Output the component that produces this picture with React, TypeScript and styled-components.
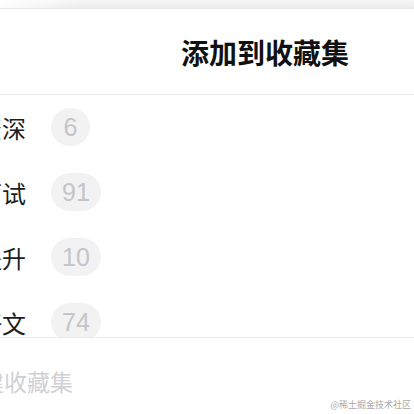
import React from "react";
import styled, { createGlobalStyle } from "styled-components";

const Global = createGlobalStyle`
  html, body {
    margin: 0;
    padding: 0;
    background: #ffffff;
    overflow: hidden;
    width: 414px;
    height: 414px;
  }
  body {
    font-family: "Liberation Sans", "Noto Sans CJK SC", sans-serif;
  }
  *, *::before, *::after {
    box-sizing: border-box;
  }
`;

const Page = styled.div`
  position: relative;
  width: 414px;
  height: 414px;
  overflow: hidden;
  display: flex;
  flex-direction: column;
`;

const Backdrop = styled.div`
  height: 8px;
  flex: none;
  background:
    linear-gradient(to right, rgba(255, 255, 255, 0.95) 0px, rgba(255, 255, 255, 0) 80px),
    repeating-linear-gradient(
      to right,
      transparent 0px,
      transparent 79px,
      #dde6f4 79px,
      #dde6f4 80px
    ),
    linear-gradient(to bottom, #f7f7f7, #ebebeb);
  background-size: 100% 100%, 40px 100%, 100% 100%;
`;

const Modal = styled.div`
  margin-left: -60px;
  width: 650px;
  flex: 1;
  display: flex;
  flex-direction: column;
  background: #ffffff;
  border-top: 1px solid #e6e6e6;
`;

const Header = styled.div`
  height: 86px;
  display: flex;
  align-items: center;
  justify-content: center;
  border-bottom: 1px solid #ebebeb;
  flex: none;
`;

const Title = styled.h2`
  margin: 0;
  font-size: 28px;
  font-weight: 700;
  color: #111111;
  font-family: "Noto Sans CJK SC", sans-serif;
`;

const List = styled.ul`
  list-style: none;
  margin: 0;
  padding: 13px 0 0 38px;
  height: 242px;
  overflow: hidden;
  flex: none;
  display: flex;
  flex-direction: column;
  gap: 27px;
`;

const Row = styled.li`
  height: 38px;
  flex: none;
  display: flex;
  align-items: center;
  gap: 25px;
`;

const Label = styled.span`
  font-family: "Noto Sans CJK SC", sans-serif;
  font-size: 24px;
  color: #1d1d1f;
  width: 48px;
  white-space: nowrap;
`;

const Badge = styled.span`
  height: 38px;
  min-width: 39px;
  padding: 0 11px;
  border-radius: 19px;
  background: #f2f2f3;
  color: #c3c5ca;
  font-family: "Liberation Sans", "Noto Sans", sans-serif;
  font-size: 25px;
  display: inline-flex;
  align-items: center;
  justify-content: center;
`;

const Footer = styled.div`
  border-top: 1px solid #ebebeb;
  flex: none;
  height: 86px;
  display: flex;
  align-items: center;
  padding-left: 18px;
`;

const NewCollection = styled.span`
  font-family: "Noto Sans CJK SC", sans-serif;
  font-size: 23px;
  color: #cfd1d5;
`;

const Watermark = styled.span`
  position: absolute;
  right: 3px;
  bottom: 3px;
  font-family: "Noto Sans CJK SC", sans-serif;
  font-size: 9px;
  color: #a9a9a9;
`;

const items = [
  { name: "资深", count: 6 },
  { name: "面试", count: 91 },
  { name: "提升", count: 10 },
  { name: "好文", count: 74 },
];

export default function App() {
  return (
    <Page>
      <Global />
      <Backdrop />
      <Modal>
        <Header>
          <Title>添加到收藏集</Title>
        </Header>
        <List>
          {items.map((it) => (
            <Row key={it.name}>
              <Label>{it.name}</Label>
              <Badge>{it.count}</Badge>
            </Row>
          ))}
        </List>
        <Footer>
          <NewCollection>新建收藏集</NewCollection>
        </Footer>
      </Modal>
      <Watermark>@稀土掘金技术社区</Watermark>
    </Page>
  );
}
